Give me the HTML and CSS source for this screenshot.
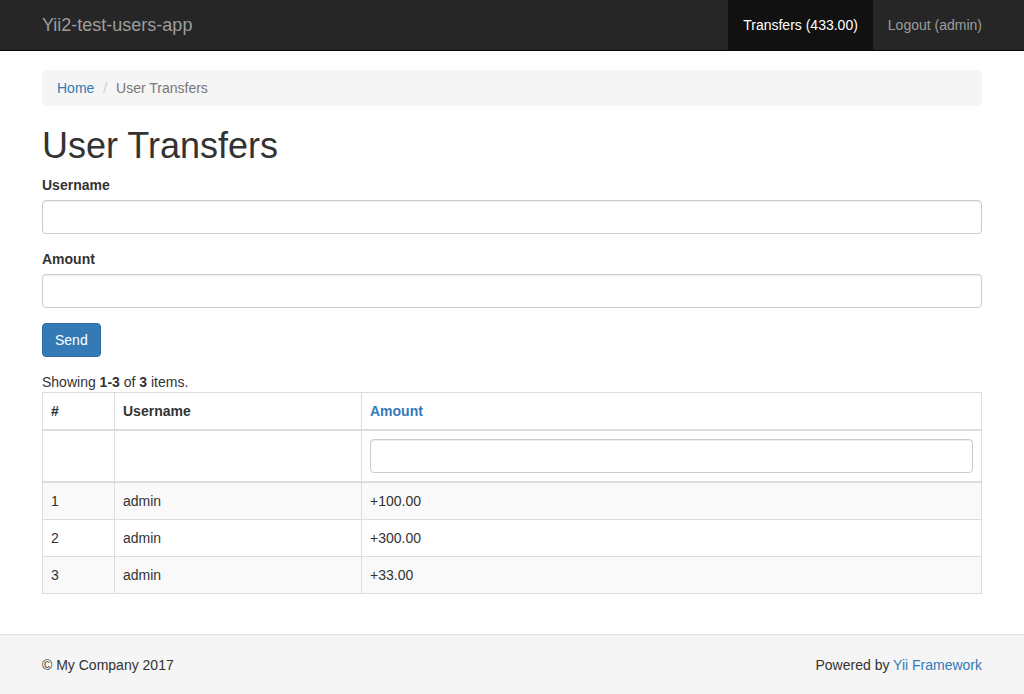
FILE: index.html
```html
<!DOCTYPE html>
<html lang="en">
<head>
<meta charset="utf-8">
<title>User Transfers</title>
<link rel="stylesheet" href="styles.css">
</head>
<body>
<div class="wrap">
  <nav class="navbar">
    <div class="nav-container">
      <a class="navbar-brand" href="#">Yii2-test-users-app</a>
      <ul class="navbar-nav">
        <li class="active"><a href="#">Transfers (433.00)</a></li>
        <li><button class="logout" type="button">Logout (admin)</button></li>
      </ul>
    </div>
  </nav>

  <div class="container">
    <ul class="breadcrumb">
      <li><a href="#">Home</a></li>
      <li class="active">User Transfers</li>
    </ul>

    <h1>User Transfers</h1>

    <form class="transfer-form">
      <div class="form-group">
        <label class="control-label">Username</label>
        <input type="text" class="form-control">
      </div>
      <div class="form-group">
        <label class="control-label">Amount</label>
        <input type="text" class="form-control">
      </div>
      <div class="form-group">
        <button type="button" class="btn btn-primary">Send</button>
      </div>
    </form>

    <div class="grid-view">
      <div class="summary">Showing <b>1-3</b> of <b>3</b> items.</div>
      <table class="table">
        <colgroup>
          <col class="col-num">
          <col class="col-user">
          <col class="col-amount">
        </colgroup>
        <thead>
          <tr>
            <th>#</th>
            <th>Username</th>
            <th><a href="#">Amount</a></th>
          </tr>
          <tr class="filters">
            <td>&nbsp;</td>
            <td>&nbsp;</td>
            <td><input type="text" class="form-control"></td>
          </tr>
        </thead>
        <tbody>
          <tr><td>1</td><td>admin</td><td>+100.00</td></tr>
          <tr><td>2</td><td>admin</td><td>+300.00</td></tr>
          <tr><td>3</td><td>admin</td><td>+33.00</td></tr>
        </tbody>
      </table>
    </div>
  </div>
</div>

<footer class="footer">
  <div class="footer-container">
    <p>&copy; My Company 2017</p>
    <p>Powered by <a href="#">Yii Framework</a></p>
  </div>
</footer>
</body>
</html>
```

FILE: styles.css
```css
* {
  box-sizing: border-box;
}

html, body {
  margin: 0;
  padding: 0;
  height: 100%;
}

body {
  font-family: "Liberation Sans", Arial, Helvetica, sans-serif;
  font-size: 14px;
  line-height: 1.42857143;
  color: #333;
  background: #fff;
}

a {
  color: #337ab7;
  text-decoration: none;
}

.wrap {
  min-height: calc(100% - 60px);
}

/* Navbar */
.navbar {
  background: #262626;
  border-bottom: 1px solid #080808;
  height: 51px;
}

.nav-container {
  width: 970px;
  margin: 0 auto;
  display: flex;
  justify-content: space-between;
  align-items: stretch;
  height: 50px;
}

.navbar-brand {
  font-size: 18px;
  line-height: 20px;
  padding: 15px 15px;
  color: #9d9d9d;
  height: 50px;
}

.navbar-nav {
  list-style: none;
  margin: 0;
  padding: 0;
  display: flex;
}

.navbar-nav li {
  display: flex;
}

.navbar-nav a,
.navbar-nav .logout {
  display: block;
  padding: 15px 15px;
  line-height: 20px;
  font-size: 14px;
  color: #9d9d9d;
  font-family: inherit;
}

.navbar-nav .active a {
  background: #111;
  color: #fff;
}

.navbar-nav .logout {
  background: transparent;
  border: 0;
  margin: 0;
  cursor: pointer;
}

/* Container */
.container {
  width: 970px;
  margin: 0 auto;
  padding: 19px 15px 20px;
}

.breadcrumb {
  list-style: none;
  margin: 0 0 20px;
  padding: 8px 15px;
  background: #f5f5f5;
  border-radius: 4px;
}

.breadcrumb li {
  display: inline-block;
}

.breadcrumb li + li::before {
  content: "/\00a0";
  padding: 0 5px;
  color: #ccc;
}

.breadcrumb .active {
  color: #777;
}

h1 {
  font-size: 36px;
  font-weight: 500;
  line-height: 1.1;
  margin: 20px 0 9px;
  color: #333;
}

.form-group {
  margin-bottom: 15px;
}

.control-label {
  display: inline-block;
  font-weight: bold;
  margin-bottom: 5px;
}

.form-control {
  display: block;
  width: 100%;
  height: 34px;
  padding: 6px 12px;
  font-size: 14px;
  line-height: 1.42857143;
  color: #555;
  background: #fff;
  border: 1px solid #ccc;
  border-radius: 4px;
  box-shadow: inset 0 1px 1px rgba(0, 0, 0, 0.075);
  font-family: inherit;
}

.btn {
  display: inline-block;
  padding: 6px 12px;
  font-size: 14px;
  line-height: 1.42857143;
  border-radius: 4px;
  border: 1px solid transparent;
  font-family: inherit;
  cursor: pointer;
}

.btn-primary {
  color: #fff;
  background: #337ab7;
  border-color: #2e6da4;
}

/* Grid */
.table {
  width: 100%;
  border-collapse: collapse;
  border-spacing: 0;
  margin-bottom: 20px;
  border: 1px solid #ddd;
}

.col-num { width: 72px; }
.col-user { width: 247px; }

.table th,
.table td {
  padding: 8px;
  line-height: 20px;
  text-align: left;
  vertical-align: top;
  border: 1px solid #ddd;
}

.table thead th {
  vertical-align: bottom;
  border-bottom-width: 2px;
}

.table thead td {
  border-bottom-width: 2px;
}

.table tbody tr:nth-of-type(odd) {
  background: #f9f9f9;
}

/* Footer */
.footer {
  height: 60px;
  background: #f5f5f5;
  border-top: 1px solid #ddd;
  padding-top: 20px;
}

.footer-container {
  width: 970px;
  margin: 0 auto;
  padding: 0 15px;
  display: flex;
  justify-content: space-between;
}

.footer p {
  margin: 0;
  line-height: 20px;
}
```
